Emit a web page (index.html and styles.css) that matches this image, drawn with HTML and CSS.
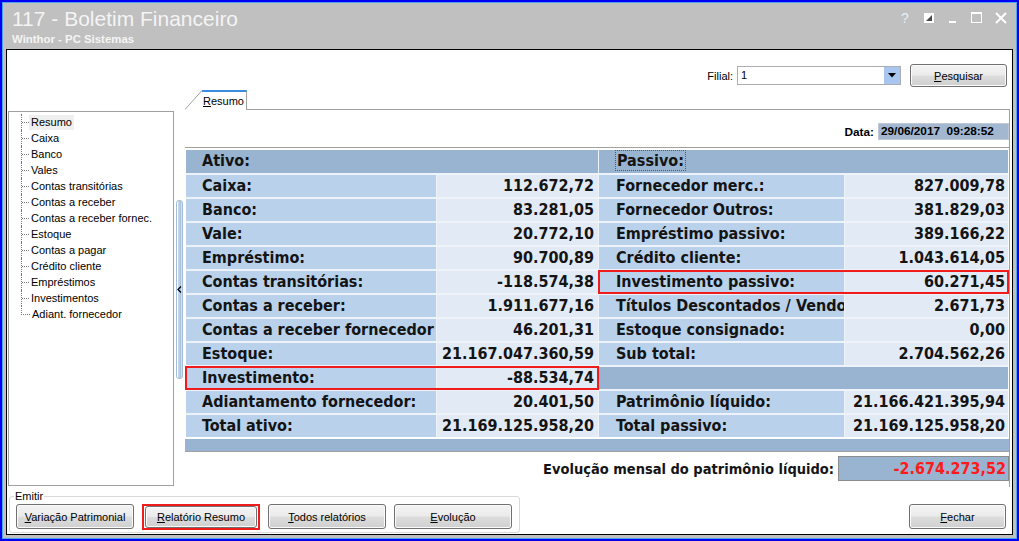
FILE: index.html
```html
<!DOCTYPE html>
<html lang="pt-BR">
<head>
  <meta charset="UTF-8">
  <title>117 - Boletim Financeiro</title>
  <link rel="stylesheet" href="styles.css">
</head>
<body>
  <div class="window">
    <header class="titlebar">
      <div class="titles">
        <h1>117 - Boletim Financeiro</h1>
        <p class="subtitle">Winthor - PC Sistemas</p>
      </div>
      <div class="caption-btns">
        <span class="cap help">?</span>
        <svg class="cap" width="14" height="12" viewBox="0 0 14 12">
          <rect x="2.5" y="1.5" width="9" height="9" fill="#fff" stroke="#fff"/>
          <polygon points="4,9 10,3 10,9" fill="#4a4a4a"/>
        </svg>
        <svg class="cap" width="14" height="12" viewBox="0 0 14 12">
          <rect x="3" y="9" width="7" height="2" fill="#fff"/>
        </svg>
        <svg class="cap" width="14" height="12" viewBox="0 0 14 12">
          <rect x="1.5" y="0.5" width="10" height="10" fill="none" stroke="#fff"/>
          <rect x="1" y="0" width="11" height="2" fill="#fff"/>
        </svg>
        <svg class="cap" width="14" height="12" viewBox="0 0 14 12">
          <path d="M2 1 L12 11 M12 1 L2 11" stroke="#fff" stroke-width="2"/>
        </svg>
      </div>
    </header>

    <main class="panel">
      <div class="topbar">
        <span class="filial-label">Filial:</span>
        <div class="combo">
          <span class="combo-value">1</span>
          <span class="combo-btn">
            <svg width="8" height="5" viewBox="0 0 8 5"><polygon points="0,0 8,0 4,4.5" fill="#000"/></svg>
          </span>
        </div>
        <button class="btn btn-search"><u>P</u>esquisar</button>
      </div>

      <div class="middle">
        <nav class="tree">
          <ul>
            <li><span class="selected">Resumo</span></li>
            <li><span>Caixa</span></li>
            <li><span>Banco</span></li>
            <li><span>Vales</span></li>
            <li><span>Contas transitórias</span></li>
            <li><span>Contas a receber</span></li>
            <li><span>Contas a receber fornec.</span></li>
            <li><span>Estoque</span></li>
            <li><span>Contas a pagar</span></li>
            <li><span>Crédito cliente</span></li>
            <li><span>Empréstimos</span></li>
            <li><span>Investimentos</span></li>
            <li><span>Adiant. fornecedor</span></li>
          </ul>
        </nav>

        <div class="splitter">
          <svg width="5" height="7" viewBox="0 0 5 7"><path d="M4 0.5 L1 3.5 L4 6.5" fill="none" stroke="#000" stroke-width="1.3"/></svg>
        </div>

        <section class="tabs">
          <div class="tabstrip">
            <svg class="tab-slant" width="17" height="20" viewBox="0 0 17 20">
              <line x1="0" y1="19.5" x2="17" y2="0.5" stroke="#a0a0a0" stroke-width="1"/>
            </svg>
            <div class="tab"><u>R</u>esumo</div>
            <div class="tab-fill"></div>
          </div>

          <div class="tabpage">
            <div class="date-row">
              <span class="date-label">Data:</span>
              <span class="date-field">29/06/2017  09:28:52</span>
            </div>

            <div class="grid-box">
              <div class="sheet">
                <div class="row row-head">
                  <div class="half left head"><span class="lbl">Ativo:</span></div>
                  <div class="half right head"><span class="lbl"><span class="focus">Passivo:</span></span></div>
                </div>
                <div class="row">
                  <div class="half left"><span class="lbl">Caixa:</span><span class="val">112.672,72</span></div>
                  <div class="half right"><span class="lbl">Fornecedor merc.:</span><span class="val">827.009,78</span></div>
                </div>
                <div class="row">
                  <div class="half left"><span class="lbl">Banco:</span><span class="val">83.281,05</span></div>
                  <div class="half right"><span class="lbl">Fornecedor Outros:</span><span class="val">381.829,03</span></div>
                </div>
                <div class="row">
                  <div class="half left"><span class="lbl">Vale:</span><span class="val">20.772,10</span></div>
                  <div class="half right"><span class="lbl">Empréstimo passivo:</span><span class="val">389.166,22</span></div>
                </div>
                <div class="row">
                  <div class="half left"><span class="lbl">Empréstimo:</span><span class="val">90.700,89</span></div>
                  <div class="half right"><span class="lbl">Crédito cliente:</span><span class="val">1.043.614,05</span></div>
                </div>
                <div class="row">
                  <div class="half left"><span class="lbl">Contas transitórias:</span><span class="val">-118.574,38</span></div>
                  <div class="half right marked"><span class="lbl">Investimento passivo:</span><span class="val">60.271,45</span></div>
                </div>
                <div class="row">
                  <div class="half left"><span class="lbl">Contas a receber:</span><span class="val">1.911.677,16</span></div>
                  <div class="half right"><span class="lbl">Títulos Descontados / Vendor:</span><span class="val">2.671,73</span></div>
                </div>
                <div class="row">
                  <div class="half left"><span class="lbl">Contas a receber fornecedor</span><span class="val">46.201,31</span></div>
                  <div class="half right"><span class="lbl">Estoque consignado:</span><span class="val">0,00</span></div>
                </div>
                <div class="row">
                  <div class="half left"><span class="lbl">Estoque:</span><span class="val">21.167.047.360,59</span></div>
                  <div class="half right"><span class="lbl">Sub total:</span><span class="val">2.704.562,26</span></div>
                </div>
                <div class="row">
                  <div class="half left marked"><span class="lbl">Investimento:</span><span class="val">-88.534,74</span></div>
                  <div class="half right head"></div>
                </div>
                <div class="row">
                  <div class="half left"><span class="lbl">Adiantamento fornecedor:</span><span class="val">20.401,50</span></div>
                  <div class="half right"><span class="lbl">Patrimônio líquido:</span><span class="val">21.166.421.395,94</span></div>
                </div>
                <div class="row">
                  <div class="half left"><span class="lbl">Total ativo:</span><span class="val">21.169.125.958,20</span></div>
                  <div class="half right"><span class="lbl">Total passivo:</span><span class="val">21.169.125.958,20</span></div>
                </div>
              </div>
              <div class="band"></div>
            </div>

            <div class="evol-row">
              <span class="evol-label">Evolução mensal do patrimônio líquido:</span>
              <span class="evol-value">-2.674.273,52</span>
            </div>
          </div>
        </section>
      </div>

      <div class="bottom">
        <fieldset class="emitir">
          <legend>Emitir</legend>
          <button class="btn"><u>V</u>ariação Patrimonial</button>
          <div class="hl-btn"><button class="btn"><u>R</u>elatório Resumo</button></div>
          <button class="btn"><u>T</u>odos relatórios</button>
          <button class="btn"><u>E</u>volução</button>
        </fieldset>
        <button class="btn btn-close"><u>F</u>echar</button>
      </div>
    </main>
  </div>
</body>
</html>
```

FILE: styles.css
```css
* {
  margin: 0;
  padding: 0;
  box-sizing: border-box;
}

body {
  width: 1019px;
  height: 541px;
  overflow: hidden;
  font-family: "Liberation Sans", Arial, sans-serif;
  font-size: 11px;
  color: #000;
}

.window {
  width: 1019px;
  height: 541px;
  display: flex;
  flex-direction: column;
  padding: 0 4px 4px;
  background: #c0c0c0;
  border: 2px solid #0000f4;
  box-shadow: inset 0 0 0 1px #4ea4ee;
}

/* title bar */
.titlebar {
  height: 47px;
  display: flex;
  justify-content: space-between;
  padding: 5px 0 0 6px;
  color: #f4f4f4;
}

.titlebar h1 {
  font-size: 21px;
  font-weight: normal;
  line-height: 24px;
}

.subtitle {
  font-size: 11.4px;
  font-weight: bold;
  line-height: 13px;
  margin-top: 2px;
}

.caption-btns {
  display: flex;
  align-items: flex-start;
  gap: 10px;
  padding: 5px 5px 0 0;
}

.cap {
  width: 14px;
  height: 12px;
  display: block;
}

.help {
  font-size: 14px;
  line-height: 12px;
  text-align: center;
  color: #e2eefb;
  margin-left: 2px;
}

/* main white panel */
.panel {
  flex: 1;
  display: flex;
  flex-direction: column;
  background: #fff;
  border: 1px solid #000;
}

.topbar {
  display: flex;
  justify-content: flex-end;
  align-items: center;
  height: 23px;
  margin-top: 14px;
  padding-right: 5px;
}

.filial-label {
  margin-right: 4px;
}

.combo {
  width: 164px;
  height: 19px;
  display: flex;
  border: 1px solid #abadb3;
}

.combo-value {
  padding-left: 3px;
  line-height: 17px;
}

.combo-btn {
  width: 16px;
  margin-left: auto;
  display: flex;
  align-items: center;
  justify-content: center;
  background: #a8c6f0;
}

.btn {
  height: 25px;
  font-family: "Liberation Sans", Arial, sans-serif;
  font-size: 11px;
  color: #000;
  border: 1px solid #707070;
  border-radius: 3px;
  background: linear-gradient(#f3f3f3 0%, #ebebeb 48%, #dddddd 52%, #cfcfcf 100%);
  box-shadow: inset 0 0 0 1px #fbfbfb;
}

.btn-search {
  width: 97px;
  height: 23px;
  margin-left: 9px;
}

/* middle area */
.middle {
  height: 400px;
  display: flex;
  align-items: flex-start;
}

.tree {
  width: 166px;
  height: 375px;
  margin: 24px 0 0 1px;
  border: 1px solid #a0a0a0;
  padding: 2px 0 0 12px;
}

.tree ul {
  list-style: none;
}

.tree li {
  display: flex;
  align-items: flex-start;
  height: 16px;
  line-height: 15px;
  border-left: 1px dotted #7a7a7a;
}

.tree li:last-child {
  border-left-color: transparent;
}

.tree li::before {
  content: '';
  width: 7px;
  height: 8px;
  border-bottom: 1px dotted #7a7a7a;
}

.tree li:last-child::before {
  margin-left: -1px;
  width: 8px;
  border-left: 1px dotted #7a7a7a;
}

.tree li span {
  padding: 0 2px;
  margin-top: 1px;
}

.tree li .selected {
  background: #efefef;
}

.splitter {
  width: 7px;
  height: 179px;
  margin: 113px 0 0 2px;
  display: flex;
  align-items: center;
  justify-content: center;
  border: 1px solid #a3bddb;
  border-radius: 3px;
  background: linear-gradient(to right, #fff 0 25%, #c9d9ea 25%, #a9c1dc 75%, #eef3f9 100%);
}

/* tab control */
.tabs {
  width: 825px;
  margin: 3px 0 0 2px;
  display: flex;
  flex-direction: column;
}

.tabstrip {
  display: flex;
  height: 20px;
}

.tab-slant {
  display: block;
}

.tab {
  width: 45px;
  padding: 3px 0 0 1px;
  border-top: 2px solid #3b8de2;
  border-right: 1px solid #a0a0a0;
  line-height: 13px;
}

.tab-fill {
  flex: 1;
  border-bottom: 1px solid #a0a0a0;
}

.tabpage {
  height: 377px;
  border-right: 1px solid #a0a0a0;
}

.date-row {
  display: flex;
  justify-content: flex-end;
  align-items: center;
  gap: 4px;
  margin-top: 13px;
  font-size: 11.8px;
  font-weight: bold;
}

.date-field {
  width: 131px;
  height: 17px;
  line-height: 15px;
  padding-left: 2px;
  white-space: pre;
  background: #a3b8d0;
  border: 1px solid #bfc8d4;
}

.grid-box {
  margin-top: 7px;
  padding-top: 2px;
  border-top: 1px solid #a0a0a0;
  border-bottom: 1px solid #a0a0a0;
}

.sheet {
  margin-left: 1px;
  width: 822px;
  display: flex;
  flex-direction: column;
  gap: 2px;
  background: #eef3fa;
  font-family: "DejaVu Sans Condensed", "DejaVu Sans", sans-serif;
  font-stretch: condensed;
  font-weight: bold;
  font-size: 16px;
  color: #141414;
}

.row {
  display: flex;
  gap: 1px;
  height: 22px;
}

.row-head {
  height: 23px;
}

.half {
  display: flex;
  gap: 1px;
}

.half.left {
  width: 412px;
}

.half.right {
  flex: 1;
}

.lbl {
  padding-left: 16px;
  line-height: 22px;
  white-space: nowrap;
  overflow: hidden;
  background: #b9d1ea;
}

.left .lbl {
  width: 250px;
}

.right .lbl {
  width: 245px;
  padding-left: 17px;
}

.val {
  flex: 1;
  padding-right: 4px;
  line-height: 22px;
  text-align: right;
  white-space: nowrap;
  background: #e2eaf6;
}

.right .val {
  padding-right: 3px;
}

.half.head {
  background: #99b4d1;
}

.head .lbl {
  flex: 1;
  background: none;
}

.focus {
  outline: 1px dotted #5a5a5a;
  padding: 0 1px;
}

.marked {
  outline: 2px solid #f01c1c;
  outline-offset: -1px;
}

.band {
  height: 12px;
  margin-top: 2px;
  background: #99b4d1;
}

.evol-row {
  display: flex;
  justify-content: flex-end;
  align-items: center;
  gap: 4px;
  margin-top: 4px;
  font-family: "DejaVu Sans Condensed", "DejaVu Sans", sans-serif;
  font-stretch: condensed;
  font-weight: bold;
  font-size: 14.5px;
  color: #141414;
}

.evol-value {
  width: 171px;
  height: 25px;
  line-height: 23px;
  padding-right: 2px;
  text-align: right;
  font-size: 16px;
  color: #ff1a1a;
  background: #99b4d1;
  border: 1px solid #8c8c8c;
}

/* bottom buttons */
.bottom {
  flex: 1;
  display: flex;
  justify-content: space-between;
  align-items: flex-end;
  padding: 0 6px 1px 2px;
}

.emitir {
  width: 511px;
  display: flex;
  gap: 8px;
  padding: 1px 6px 2px;
  border: 1px solid #d9d9d9;
  border-radius: 3px;
}

.emitir legend {
  margin-left: -2px;
  padding: 0 1px;
  line-height: 13px;
}

.emitir .btn {
  width: 118px;
}

.hl-btn {
  width: 118px;
  height: 26px;
  padding: 0 1px;
  border: 2px solid #f01c1c;
}

.emitir .hl-btn .btn {
  width: 112px;
  height: 22px;
}

.btn-close {
  width: 97px;
  margin-bottom: 4px;
}
```
